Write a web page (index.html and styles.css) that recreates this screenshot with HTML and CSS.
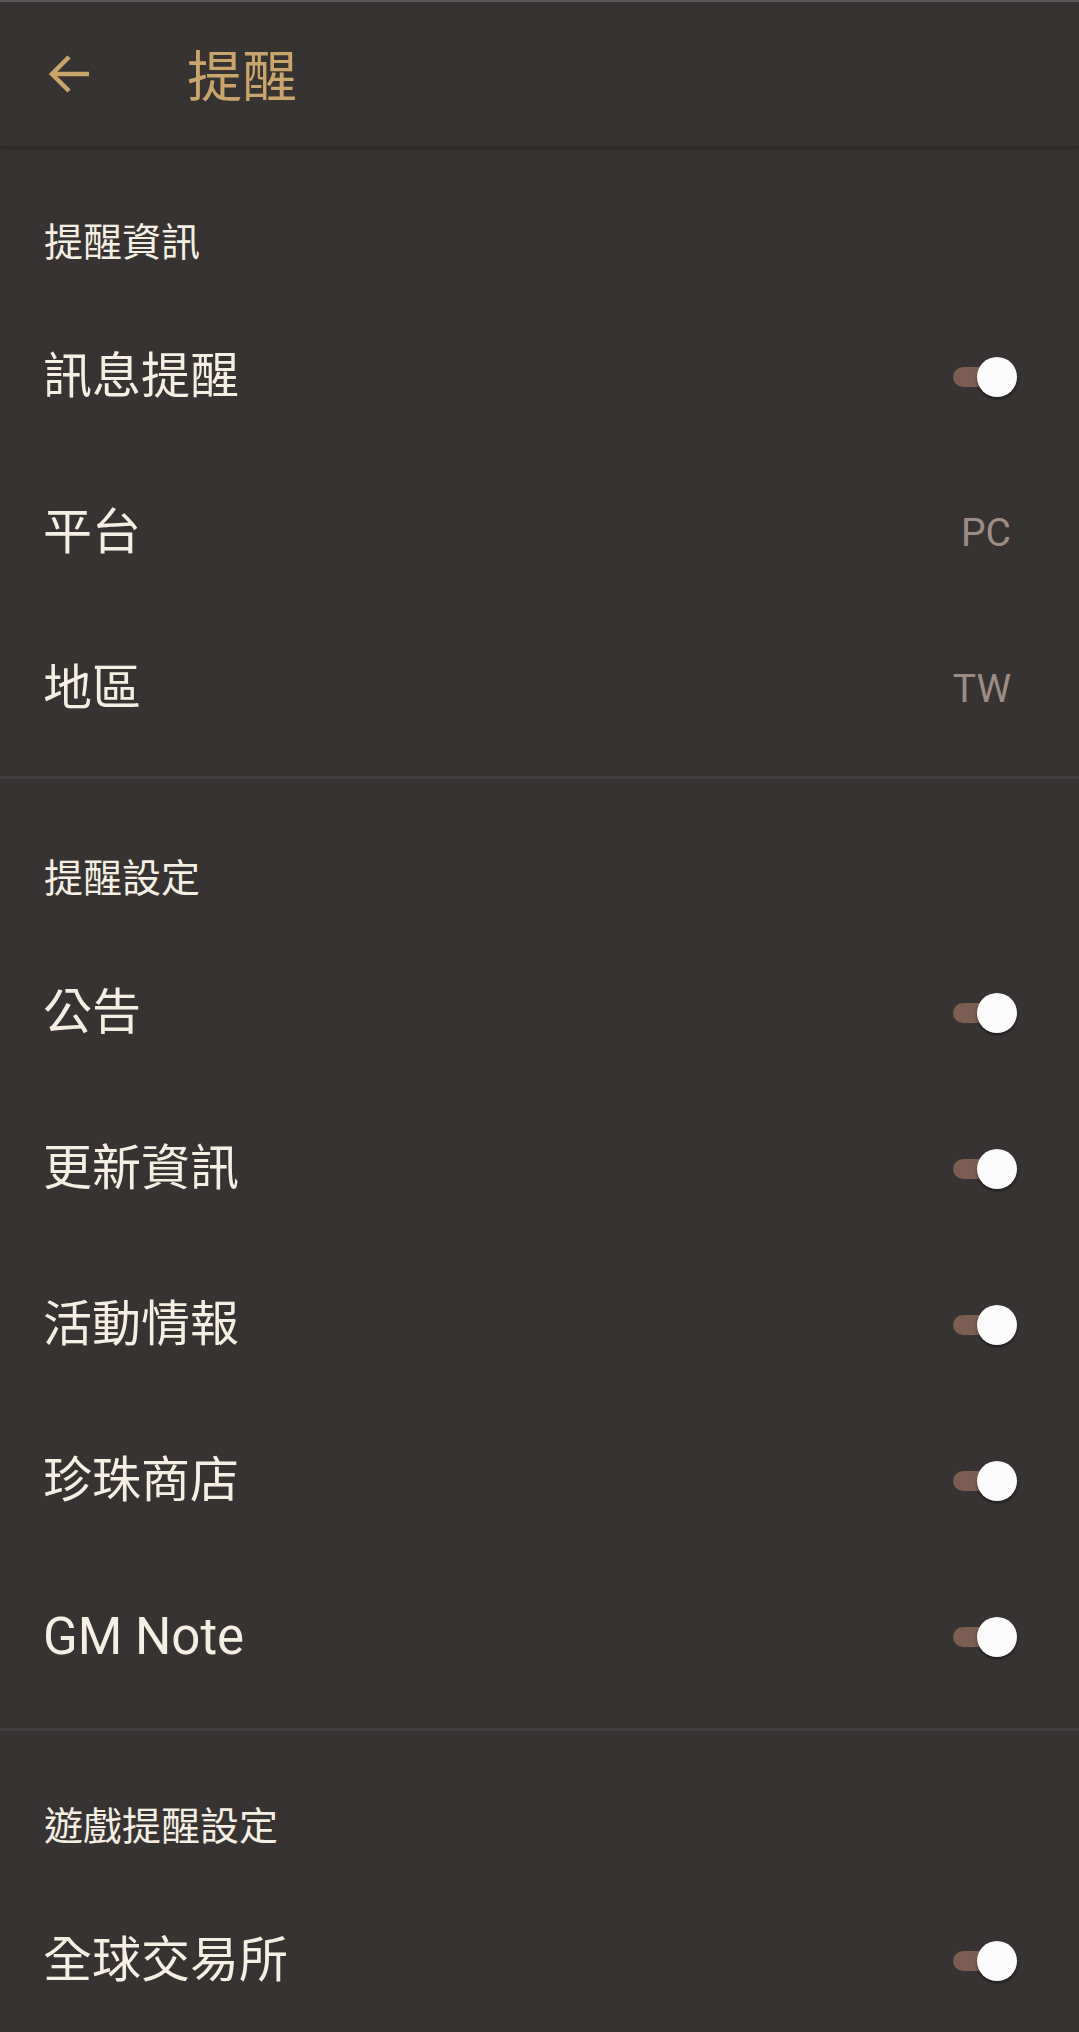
FILE: index.html
```html
<!DOCTYPE html>
<html lang="zh-Hant">
<head>
<meta charset="utf-8">
<title>提醒</title>
<link rel="stylesheet" href="styles.css">
</head>
<body>
<header class="appbar">
  <svg class="back" viewBox="0 0 42 42" width="42" height="42" aria-hidden="true">
    <path d="M42 21H5" fill="none" stroke="#c9a56b" stroke-width="4.5"/>
    <path d="M22 4L5 21L22 38" fill="none" stroke="#c9a56b" stroke-width="4.5" stroke-linejoin="miter"/>
  </svg>
  <h1 class="title">提醒</h1>
</header>
<main>
  <section class="section first">
    <div class="section-title">提醒資訊</div>
    <div class="row"><span class="label">訊息提醒</span><span class="switch"><span class="track"></span><span class="thumb"></span></span></div>
    <div class="row"><span class="label">平台</span><span class="value">PC</span></div>
    <div class="row"><span class="label">地區</span><span class="value">TW</span></div>
  </section>
  <section class="section second">
    <div class="section-title">提醒設定</div>
    <div class="row"><span class="label">公告</span><span class="switch"><span class="track"></span><span class="thumb"></span></span></div>
    <div class="row"><span class="label">更新資訊</span><span class="switch"><span class="track"></span><span class="thumb"></span></span></div>
    <div class="row"><span class="label">活動情報</span><span class="switch"><span class="track"></span><span class="thumb"></span></span></div>
    <div class="row"><span class="label">珍珠商店</span><span class="switch"><span class="track"></span><span class="thumb"></span></span></div>
    <div class="row"><span class="label latin">GM Note</span><span class="switch"><span class="track"></span><span class="thumb"></span></span></div>
  </section>
  <section class="section last">
    <div class="section-title">遊戲提醒設定</div>
    <div class="row"><span class="label">全球交易所</span><span class="switch"><span class="track"></span><span class="thumb"></span></span></div>
  </section>
</main>
</body>
</html>
```
FILE: styles.css
```css
html, body {
  margin: 0;
  padding: 0;
}
body {
  width: 1079px;
  height: 2032px;
  overflow: hidden;
  background: #373332;
  font-family: Roboto, "Noto Sans CJK TC", "Noto Sans", sans-serif;
  color: #f4efe2;
}
.appbar {
  box-sizing: border-box;
  height: 148px;
  border-top: 2px solid #58575a;
  border-bottom: 2px solid #2e2a29;
  box-shadow: 0 2px 3px rgba(0, 0, 0, 0.18);
  background: #373332;
  display: flex;
  align-items: center;
  padding-left: 47px;
  position: relative;
}
.back {
  display: block;
  flex: none;
}
.title {
  margin: 0 0 5px 98px;
  font-size: 55px;
  line-height: 60px;
  font-weight: 400;
  color: #c9a56b;
  font-family: "Noto Sans CJK TC", sans-serif;
}
.section {
  padding-bottom: 13px;
  border-bottom: 3px solid #3f3f42;
}
.section.first {
  padding-bottom: 9px;
}
.section.last {
  border-bottom: none;
}
.section-title {
  padding: 76px 44px 36px;
  font-size: 39px;
  line-height: 40px;
  color: #f4efe2;
}
.section.first .section-title {
  padding-top: 75px;
}
.section.second .section-title {
  padding-top: 80px;
}
.row {
  height: 156px;
  display: flex;
  align-items: center;
  justify-content: space-between;
  padding: 0 62px 0 43px;
}
.label {
  font-size: 49px;
  line-height: 56px;
  color: #f4efe2;
}
.label.latin {
  font-size: 51px;
}
.value {
  font-size: 39px;
  color: #9d8c84;
  margin-right: 6px;
}
.switch {
  position: relative;
  width: 64px;
  height: 40px;
  display: block;
}
.track {
  position: absolute;
  left: 0;
  top: 10px;
  width: 56px;
  height: 20px;
  border-radius: 10px;
  background: #7b5d51;
}
.thumb {
  position: absolute;
  right: 0;
  top: 0;
  width: 40px;
  height: 40px;
  border-radius: 50%;
  background: #fbfbfb;
  box-shadow: 0 2px 3px rgba(0, 0, 0, 0.45);
}
```
